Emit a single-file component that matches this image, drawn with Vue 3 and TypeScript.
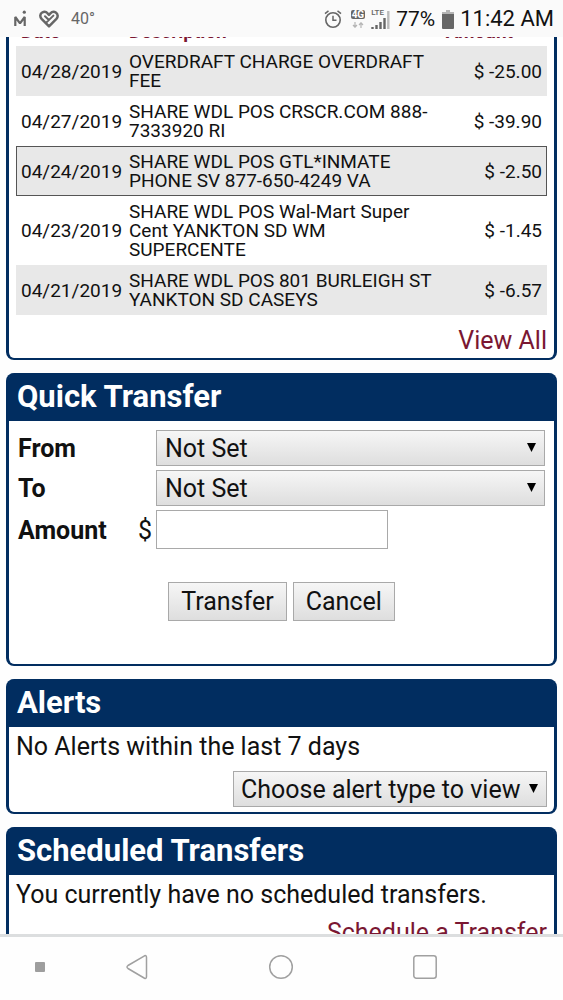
<script setup lang="ts">
import { ref } from 'vue'

interface Transaction {
  date: string
  description: string
  amount: string
  selected?: boolean
}

const transactions: Transaction[] = [
  { date: '04/28/2019', description: 'OVERDRAFT CHARGE OVERDRAFT FEE', amount: '$ -25.00' },
  { date: '04/27/2019', description: 'SHARE WDL POS CRSCR.COM 888-7333920 RI', amount: '$ -39.90' },
  { date: '04/24/2019', description: 'SHARE WDL POS GTL*INMATE PHONE SV 877-650-4249 VA', amount: '$ -2.50', selected: true },
  { date: '04/23/2019', description: 'SHARE WDL POS Wal-Mart Super Cent YANKTON SD WM SUPERCENTE', amount: '$ -1.45' },
  { date: '04/21/2019', description: 'SHARE WDL POS 801 BURLEIGH ST YANKTON SD CASEYS', amount: '$ -6.57' },
]

const from = ref('')
const to = ref('')
const amount = ref('')
const alertType = ref('')

function reset() {
  from.value = ''
  to.value = ''
  amount.value = ''
}
</script>

<template>
  <div class="screen">
    <header class="status">
      <div class="status-left">
        <svg width="13" height="18" viewBox="0 0 13 18" aria-hidden="true">
          <path d="M1.300 16V7L6 13.300 10.700 7V16" fill="none" stroke="#666" stroke-width="2.200" stroke-linejoin="bevel" />
          <circle cx="10.300" cy="2.200" r="1.600" fill="#666" />
        </svg>
        <svg width="20" height="18" viewBox="0 0 20 18" aria-hidden="true">
          <path d="M10 16.300 2.600 8.900C.6 6.700 1 3.800 3.200 2.500c2-1.200 4.200-.6 5.400.8L10 4.800l1.400-1.500c1.400-1.500 3.700-2 5.500-.7 2.100 1.400 2.400 4.300.5 6.300Z" fill="none" stroke="#666" stroke-width="2.500" stroke-linejoin="round" />
          <path d="M6 6.200 9.600 9.800M14.400 5.600 7.500 12.400" fill="none" stroke="#666" stroke-width="2" stroke-linecap="round" />
        </svg>
        <span class="temp">40°</span>
      </div>
      <div class="status-right">
        <svg width="18" height="20" viewBox="0 0 18 20" aria-hidden="true">
          <circle cx="9" cy="11" r="7.200" fill="none" stroke="#666" stroke-width="1.600" />
          <path d="M9 6.800V11.300h3.500M1 4.600 4.500 1.800M17 4.600l-3.500-2.800" fill="none" stroke="#666" stroke-width="1.500" />
        </svg>
        <div class="network">
          <span class="badge">4G</span>
          <svg width="12" height="6" viewBox="0 0 12 6" aria-hidden="true">
            <path d="M3 0v5M1 3l2 2.200L5 3M9 6V1M7 3l2-2.200L11 3" fill="none" stroke="#b5b5b5" stroke-width="1.200" />
          </svg>
        </div>
        <div class="signal">
          <span class="lte">LTE</span>
          <svg width="19" height="19" viewBox="0 0 19 19" aria-hidden="true">
            <path d="M1.500 19v-2M5.500 19v-4M9.500 19v-7M13.500 19V8" stroke="#666" stroke-width="2.400" />
            <path d="M17.300 19V1" stroke="#bbb" stroke-width="2.400" />
          </svg>
        </div>
        <span class="battery-level">77%</span>
        <svg class="battery" width="12" height="19" viewBox="0 0 12 19" aria-hidden="true">
          <path d="M4 0h4v2h4v3H0V2h4Z" fill="#b5b5b5" />
          <path d="M0 4h12v14a1 1 0 0 1-1 1H1a1 1 0 0 1-1-1Z" fill="#666" />
        </svg>
        <span class="clock">11:42 AM</span>
      </div>
    </header>

    <main class="page">
      <section class="card history">
        <table>
          <colgroup>
            <col class="col-date" />
            <col />
            <col class="col-amount" />
          </colgroup>
          <thead>
            <tr>
              <th scope="col">Date</th>
              <th scope="col">Description</th>
              <th scope="col" class="amount">Amount</th>
            </tr>
          </thead>
          <tbody>
            <tr v-for="t in transactions" :key="t.date" :class="{ selected: t.selected }">
              <td>{{ t.date }}</td>
              <td>{{ t.description }}</td>
              <td class="amount">{{ t.amount }}</td>
            </tr>
          </tbody>
        </table>
        <div class="more"><a href="#history">View All</a></div>
      </section>

      <section class="card">
        <h2>Quick Transfer</h2>
        <form @submit.prevent>
          <div class="fields">
            <label for="from">From</label>
            <div class="select">
              <select id="from" v-model="from"><option value="">Not Set</option></select>
            </div>
            <label for="to">To</label>
            <div class="select">
              <select id="to" v-model="to"><option value="">Not Set</option></select>
            </div>
            <label class="amount-label" for="amount">Amount <span class="currency">$</span></label>
            <input id="amount" v-model="amount" type="text" inputmode="decimal" />
          </div>
          <div class="actions">
            <button type="submit">Transfer</button>
            <button type="button" @click="reset">Cancel</button>
          </div>
        </form>
      </section>

      <section class="card">
        <h2>Alerts</h2>
        <p>No Alerts within the last 7 days</p>
        <div class="alert-filter">
          <div class="select compact">
            <select v-model="alertType" aria-label="Alert type">
              <option value="">Choose alert type to view</option>
            </select>
          </div>
        </div>
      </section>

      <section class="card">
        <h2>Scheduled Transfers</h2>
        <p>You currently have no scheduled transfers.</p>
        <div class="more"><a href="#schedule">Schedule a Transfer</a></div>
      </section>
    </main>

    <nav class="navbar" aria-label="System">
      <button type="button" class="nav-dot" aria-label="Hide bar">
        <svg width="10" height="10" viewBox="0 0 10 10"><rect width="10" height="10" rx="1" fill="#9e9e9e" /></svg>
      </button>
      <button type="button" aria-label="Back">
        <svg width="24" height="26" viewBox="0 0 24 26"><path d="M19.500 1.800 3 11.500q-2 1.500 0 3l16.500 9.700q2 .8 2-1.700v-19q0-2.500-2-1.700Z" fill="none" stroke="#a0a0a0" stroke-width="1.500" /></svg>
      </button>
      <button type="button" aria-label="Home">
        <svg width="26" height="26" viewBox="0 0 26 26"><circle cx="13" cy="13" r="11.300" fill="none" stroke="#a0a0a0" stroke-width="1.500" /></svg>
      </button>
      <button type="button" aria-label="Recent apps">
        <svg width="26" height="26" viewBox="0 0 26 26"><rect x="1.800" y="1.800" width="22.400" height="22.400" rx="2.500" fill="none" stroke="#a0a0a0" stroke-width="1.500" /></svg>
      </button>
    </nav>
  </div>
</template>

<style>
body {
  margin: 0;
}
</style>

<style scoped>
.screen {
  display: flex;
  flex-direction: column;
  height: 100vh;
  overflow: hidden;
  background: #fefefe;
  color: #111;
  font-family: Roboto, "Liberation Sans", sans-serif;
  font-size: 25px;
  line-height: 28px;
}

.status {
  flex: none;
  display: flex;
  justify-content: space-between;
  align-items: center;
  height: 37px;
  padding: 1px 9px 0 14px;
  box-sizing: border-box;
  background: #fafafa;
}

.status-left,
.status-right {
  display: flex;
  align-items: center;
}

.status-left {
  gap: 12px;
}

.temp {
  color: #666;
  font-size: 16px;
}

.network {
  display: flex;
  flex-direction: column;
  align-items: center;
  gap: 3px;
  margin: 0 6px 0 9px;
}

.badge {
  padding: 0 1px;
  border-radius: 2px;
  background: #666;
  color: #fff;
  font-size: 10px;
  font-weight: 700;
  line-height: 9px;
}

.signal {
  position: relative;
  display: flex;
}

.lte {
  position: absolute;
  top: -2px;
  left: 0;
  color: #666;
  font-size: 8px;
  font-weight: 500;
  line-height: 10px;
}

.battery-level {
  margin: 0 7px 0 6px;
  font-size: 21px;
}

.battery {
  margin-right: 6px;
}

.clock {
  font-size: 22px;
}

.page {
  flex: 1;
  min-height: 0;
  overflow: hidden;
}

.card {
  margin: 0 6px 13px;
  border: solid #012d60;
  border-width: 0 3px 2px;
  border-radius: 8px;
  background: #fff;
}

/* The page is scrolled past the table's heading row. */
.history {
  margin-top: -22px;
}

h2 {
  margin: 0;
  padding: 0 8px;
  border-radius: 5px 5px 0 0;
  background: #012d60;
  color: #fff;
  font-size: 31px;
  line-height: 48px;
}

p {
  margin: 0;
  padding: 6px 7px 10px;
}

a {
  color: #7a1732;
  text-decoration: none;
}

.more {
  padding: 12px 7px 3px;
  text-align: right;
}

p + .more {
  padding-top: 0;
}

table {
  width: calc(100% - 14px);
  margin: 0 7px;
  border-collapse: collapse;
  table-layout: fixed;
  font-size: 19px;
  line-height: 19px;
}

.col-date {
  width: 108px;
}

.col-amount {
  width: 104px;
}

td {
  padding: 6px 5px;
}

th {
  padding: 7px 5px 5px;
  color: #7a1732;
  text-align: left;
}

th.amount,
td.amount {
  text-align: right;
}

th.amount {
  padding-right: 34px;
  padding-left: 0;
}

tbody tr:nth-child(odd) {
  background: #e8e8e8;
}

.selected {
  outline: 1px solid #555;
  outline-offset: -1px;
}

.fields {
  display: grid;
  grid-template-columns: 138px 1fr;
  align-items: center;
  gap: 4px 0;
  padding: 9px 9px 0;
}

label {
  padding-top: 2px;
  font-weight: 700;
}

.amount-label {
  display: flex;
  justify-content: space-between;
}

.currency {
  padding-right: 4px;
  font-weight: 400;
}

select,
input,
button {
  box-sizing: border-box;
  margin: 0;
  border: 1px solid #a9a9a9;
  border-radius: 0;
  color: inherit;
  font: inherit;
}

select,
.actions button {
  background: linear-gradient(#f6f6f6, #dedede);
}

.select {
  position: relative;
}

.select::after {
  position: absolute;
  top: 13px;
  right: 9px;
  width: 9px;
  height: 9px;
  background: #000;
  clip-path: polygon(0 0, 100% 0, 50% 100%);
  content: "";
  pointer-events: none;
}

select {
  display: block;
  width: 100%;
  height: 36px;
  padding: 1px 28px 0 8px;
  appearance: none;
}

.compact select {
  padding: 1px 25px 0 7px;
}

input {
  width: 232px;
  height: 39px;
  padding: 0 8px;
  background: #fff;
}

.actions {
  display: flex;
  justify-content: center;
  gap: 6px;
  padding: 33px 0 43px;
}

.actions button {
  height: 39px;
  padding: 1px 12px 0;
}

.alert-filter {
  display: flex;
  justify-content: flex-end;
  padding: 0 7px 5px;
}

.navbar {
  flex: none;
  display: grid;
  grid-template-columns: 65px 144px 144px 144px;
  align-items: center;
  height: 66px;
  padding-bottom: 3px;
  box-sizing: border-box;
  border-top: 3px solid #dcdedf;
  background: #fefefe;
}

.navbar button {
  display: flex;
  justify-content: center;
  padding: 0;
  border: 0;
  background: none;
}

.navbar .nav-dot {
  padding-left: 14px;
}
</style>
